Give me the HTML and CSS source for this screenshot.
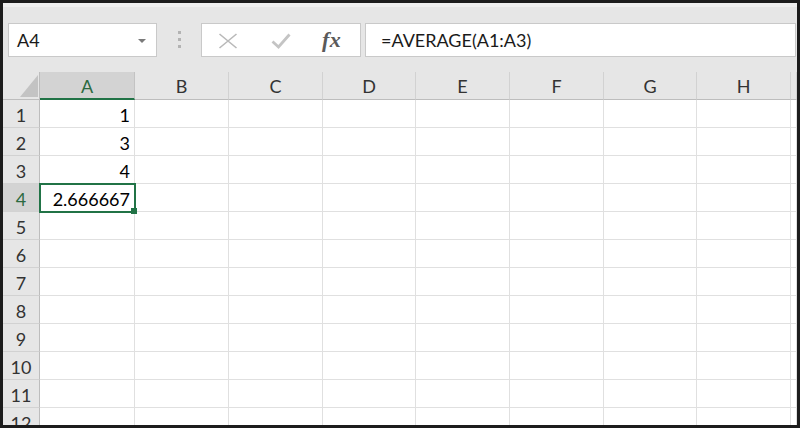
FILE: index.html
```html
<!DOCTYPE html>
<html>
<head>
<meta charset="utf-8">
<link rel="stylesheet" href="styles.css">
</head>
<body>
<div class="frame">
  <div class="toolbar">
    <div class="namebox">
      <span class="name">A4</span>
      <svg class="caret" width="8" height="4" viewBox="0 0 8 4"><polygon points="0,0 8,0 4,4" fill="#7a7a7a"/></svg>
    </div>
    <div class="grip"><i></i><i></i><i></i></div>
    <div class="fbtns">
      <svg class="icon-x" width="20" height="16" viewBox="0 0 20 16"><path d="M1.5 1 L18.5 15 M18.5 1 L1.5 15" stroke="#b9b9b9" stroke-width="1.6" fill="none"/></svg>
      <svg class="icon-check" width="20" height="16" viewBox="0 0 20 16"><path d="M1.5 8.5 L7.5 14 L18.5 1.5" stroke="#c4c4c4" stroke-width="2.8" fill="none"/></svg>
      <span class="fx">fx</span>
    </div>
    <div class="finput">=AVERAGE(A1:A3)</div>
  </div>
  <div class="sheet">
    <div class="corner"><svg width="18" height="22" viewBox="0 0 18 22"><polygon points="18,0 18,22 0,22" fill="#c3c3c3"/></svg></div>
    <div class="ch sel">A</div><div class="ch">B</div><div class="ch">C</div><div class="ch">D</div><div class="ch">E</div><div class="ch">F</div><div class="ch">G</div><div class="ch">H</div><div class="ch"></div>

    <div class="rh">1</div><div class="c">1</div><div class="c"></div><div class="c"></div><div class="c"></div><div class="c"></div><div class="c"></div><div class="c"></div><div class="c"></div><div class="c"></div>
    <div class="rh">2</div><div class="c">3</div><div class="c"></div><div class="c"></div><div class="c"></div><div class="c"></div><div class="c"></div><div class="c"></div><div class="c"></div><div class="c"></div>
    <div class="rh">3</div><div class="c">4</div><div class="c"></div><div class="c"></div><div class="c"></div><div class="c"></div><div class="c"></div><div class="c"></div><div class="c"></div><div class="c"></div>
    <div class="rh sel">4</div><div class="c active">2.666667<span class="selbox"><span class="handle"></span></span></div><div class="c"></div><div class="c"></div><div class="c"></div><div class="c"></div><div class="c"></div><div class="c"></div><div class="c"></div><div class="c"></div>
    <div class="rh">5</div><div class="c"></div><div class="c"></div><div class="c"></div><div class="c"></div><div class="c"></div><div class="c"></div><div class="c"></div><div class="c"></div><div class="c"></div>
    <div class="rh">6</div><div class="c"></div><div class="c"></div><div class="c"></div><div class="c"></div><div class="c"></div><div class="c"></div><div class="c"></div><div class="c"></div><div class="c"></div>
    <div class="rh">7</div><div class="c"></div><div class="c"></div><div class="c"></div><div class="c"></div><div class="c"></div><div class="c"></div><div class="c"></div><div class="c"></div><div class="c"></div>
    <div class="rh">8</div><div class="c"></div><div class="c"></div><div class="c"></div><div class="c"></div><div class="c"></div><div class="c"></div><div class="c"></div><div class="c"></div><div class="c"></div>
    <div class="rh">9</div><div class="c"></div><div class="c"></div><div class="c"></div><div class="c"></div><div class="c"></div><div class="c"></div><div class="c"></div><div class="c"></div><div class="c"></div>
    <div class="rh">10</div><div class="c"></div><div class="c"></div><div class="c"></div><div class="c"></div><div class="c"></div><div class="c"></div><div class="c"></div><div class="c"></div><div class="c"></div>
    <div class="rh">11</div><div class="c"></div><div class="c"></div><div class="c"></div><div class="c"></div><div class="c"></div><div class="c"></div><div class="c"></div><div class="c"></div><div class="c"></div>
    <div class="rh">12</div><div class="c"></div><div class="c"></div><div class="c"></div><div class="c"></div><div class="c"></div><div class="c"></div><div class="c"></div><div class="c"></div><div class="c"></div>
  </div>
</div>
</body>
</html>
```

FILE: styles.css
```css
* { box-sizing: border-box; }
body {
  margin: 0;
  font-family: Lato, "Open Sans", "Liberation Sans", sans-serif;
  background: #fff;
}
.frame {
  width: 800px;
  height: 428px;
  border: 3px solid #1c1c1c;
  overflow: hidden;
  background: #e6e6e6;
  display: flex;
  flex-direction: column;
}
.toolbar {
  flex: none;
  height: 69px;
  display: flex;
  align-items: flex-start;
  padding: 20px 1px 0 5px;
  background: linear-gradient(#efefef 0 4px, #e6e6e6 4px);
}
.namebox {
  flex: none;
  width: 149px;
  height: 34px;
  background: #fff;
  border: 1px solid #c9c9c9;
  display: flex;
  align-items: center;
  justify-content: space-between;
  padding: 0 10px 0 8px;
}
.name {
  font-size: 18px;
  line-height: 32px;
  color: #1a1a1a;
}
.caret { display: block; margin-top: 1px; }
.grip {
  flex: none;
  margin: 8px 0 0 21px;
  display: flex;
  flex-direction: column;
  gap: 4px;
}
.grip i {
  display: block;
  width: 3px;
  height: 3px;
  background: #b3b3b3;
}
.fbtns {
  flex: none;
  margin-left: 20px;
  width: 160px;
  height: 34px;
  background: #fff;
  border: 1px solid #c9c9c9;
  display: flex;
  align-items: center;
  padding-left: 16px;
}
.icon-x { display: block; margin-top: 2px; }
.icon-check { display: block; margin-left: 33px; margin-top: 2px; }
.fx {
  margin-left: 31px;
  font-family: "Liberation Serif", "DejaVu Serif", serif;
  font-style: italic;
  font-weight: bold;
  font-size: 22px;
  letter-spacing: 0.5px;
  color: #5a5a5a;
  line-height: 32px;
}
.finput {
  flex: 1;
  margin-left: 4px;
  height: 34px;
  background: #fff;
  border: 1px solid #c9c9c9;
  padding-left: 15px;
  font-size: 18px;
  line-height: 32px;
  color: #1a1a1a;
}
.sheet {
  flex: 1;
  display: grid;
  grid-template-columns: 37px 95px 94px 94px 93px 94px 94px 93px 94px 1fr;
  grid-auto-rows: 28px;
  background: #fff;
}
.corner {
  background: #e6e6e6;
  border-right: 1px solid #bdbdbd;
  border-bottom: 1px solid #bdbdbd;
  display: flex;
  justify-content: flex-end;
  align-items: flex-end;
  padding: 0 1px 2px 0;
}
.corner svg { display: block; }
.ch {
  background: #e6e6e6;
  border-right: 1px solid #d2d2d2;
  border-bottom: 1px solid #bdbdbd;
  text-align: center;
  font-size: 18px;
  line-height: 24px;
  padding-top: 2px;
  color: #333;
}
.ch.sel {
  background: #d3d3d3;
  border-right-color: #c3c3c3;
  border-bottom: 2px solid #217346;
  color: #2b6a40;
}
.rh {
  background: #e6e6e6;
  border-right: 1px solid #bdbdbd;
  border-bottom: 1px solid #d2d2d2;
  text-align: center;
  font-size: 18px;
  line-height: 24px;
  padding-top: 3px;
  color: #333;
}
.rh.sel {
  background: #d3d3d3;
  color: #2b6a40;
}
.c {
  border-right: 1px solid #e0e0e0;
  border-bottom: 1px solid #e0e0e0;
  text-align: right;
  font-size: 18px;
  line-height: 24px;
  padding: 3px 4px 0 0;
  color: #000;
}
.c.active { position: relative; }
.selbox {
  position: absolute;
  left: -1px;
  top: -1px;
  right: -2px;
  bottom: -2px;
  border: 2px solid #217346;
}
.handle {
  position: absolute;
  right: -3px;
  bottom: -3px;
  width: 6px;
  height: 6px;
  background: #217346;
}
```
